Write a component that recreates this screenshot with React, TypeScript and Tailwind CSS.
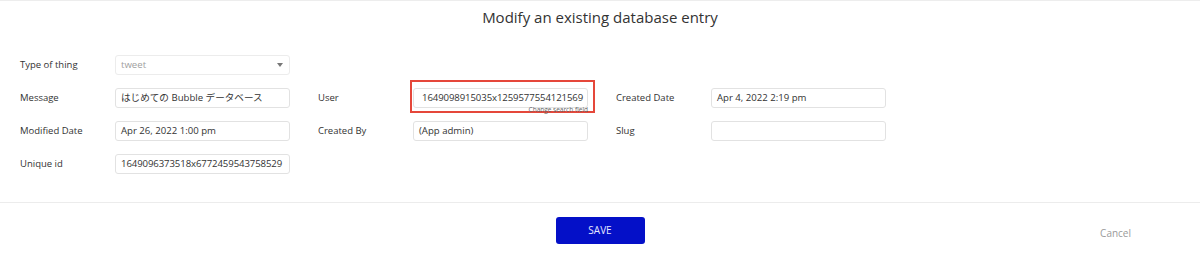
import React from 'react';

const font = { fontFamily: '"Open Sans", "Noto Sans CJK JP", sans-serif' };

function Label({ children }: { children: React.ReactNode }) {
  return <div className="w-[95px] shrink-0 text-[9.5px] text-[#333]">{children}</div>;
}

function Box({ value, muted, className = '' }: { value?: string; muted?: boolean; className?: string }) {
  return (
    <div
      className={`flex h-[20px] w-[175px] items-center whitespace-nowrap rounded-[3px] border border-[#e2e2e2] bg-white pl-[5px] text-[9.6px] ${
        muted ? 'text-[#a0a0a0]' : 'text-[#333]'
      } ${className}`}
    >
      {value}
    </div>
  );
}

function Field({ label, children }: { label: string; children: React.ReactNode }) {
  return (
    <div className="flex h-[20px] w-[298px] items-center">
      <Label>{label}</Label>
      {children}
    </div>
  );
}

export default function App() {
  return (
    <div className="h-[255px] w-[1200px] overflow-hidden border-t border-[#ededed] bg-white" style={font}>
      <div className="flex h-[33px] items-center justify-center text-[15px] text-[#333]">
        Modify an existing database entry
      </div>

      <div className="flex flex-col gap-[13px] border-b border-[#ececec] pb-[28px] pl-[20px] pt-[21px]">
        <div className="flex">
          <Field label="Type of thing">
            <div className="relative">
              <Box value="tweet" muted className="border-[#ececec]" />
              <span className="absolute right-[7px] top-[8px] h-0 w-0 border-x-[3px] border-t-[4px] border-x-transparent border-t-[#777]" />
            </div>
          </Field>
        </div>
        <div className="flex">
          <Field label="Message">
            <Box value="はじめての Bubble データベース" />
          </Field>
          <Field label="User">
            <div className="relative">
              <Box value="1649098915035x1259577554121569" className="pl-[8px] tracking-[-0.1px]" />
              <div className="pointer-events-none absolute -left-[3px] -right-[7px] -top-[8px] -bottom-[5px] border-2 border-[#e5473a]" />
              <span className="absolute right-0 top-[19px] whitespace-nowrap text-[6.5px] leading-none text-[#666]">
                Change search field
              </span>
            </div>
          </Field>
          <Field label="Created Date">
            <Box value="Apr 4, 2022 2:19 pm" />
          </Field>
        </div>
        <div className="flex">
          <Field label="Modified Date">
            <Box value="Apr 26, 2022 1:00 pm" />
          </Field>
          <Field label="Created By">
            <Box value="(App admin)" />
          </Field>
          <Field label="Slug">
            <Box />
          </Field>
        </div>
        <div className="flex">
          <Field label="Unique id">
            <Box value="1649096373518x6772459543758529" className="tracking-[-0.1px]" />
          </Field>
        </div>
      </div>

      <div className="grid grid-cols-3 pt-[14px]">
        <div />
        <div className="flex justify-center">
          <button className="h-[27px] w-[89px] rounded-[3px] bg-[#0410c8] text-[10px] text-[#e6e8ff]">SAVE</button>
        </div>
        <div className="flex justify-end pr-[69px] pt-[9px]">
          <span className="text-[10px] text-[#9a9a9a]">Cancel</span>
        </div>
      </div>
    </div>
  );
}
